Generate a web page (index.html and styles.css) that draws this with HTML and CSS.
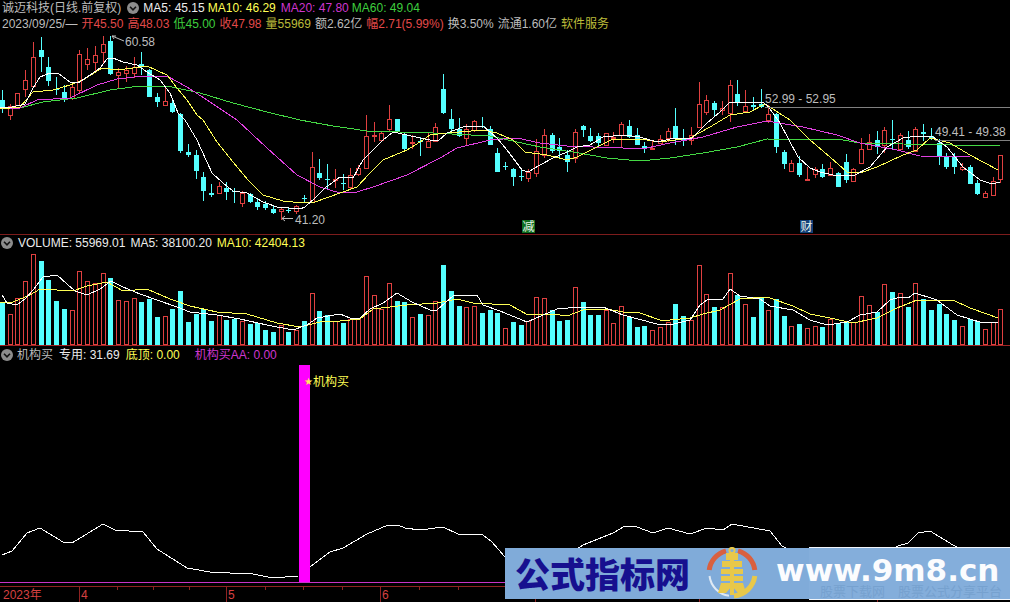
FILE: index.html
```html
<!DOCTYPE html>
<html lang="zh-CN">
<head>
<meta charset="utf-8">
<title>诚迈科技 日线</title>
<link rel="stylesheet" href="styles.css">
</head>
<body>
<main class="terminal">
  <section class="panel panel-price">
    <div class="row row-first">
      <span class="t-gray name">诚迈科技(日线.前复权)</span>
      <span class="chev"><svg viewBox="0 0 12 12"><circle cx="6" cy="6" r="6"/><path d="M3 4.8 6 7.8 9 4.8"/></svg></span>
      <span class="t-white">MA5: 45.15</span>
      <span class="t-yellow">MA10: 46.29</span>
      <span class="t-purple">MA20: 47.80</span>
      <span class="t-green">MA60: 49.04</span>
    </div>
    <div class="row row-second">
      <span class="t-gray">2023/09/25/—</span>
      <span class="t-red">开45.50</span>
      <span class="t-red">高48.03</span>
      <span class="t-green">低45.00</span>
      <span class="t-red">收47.98</span>
      <span class="t-olive">量55969</span>
      <span class="t-gray">额2.62亿</span>
      <span class="t-red">幅2.71(5.99%)</span>
      <span class="t-gray">换3.50%</span>
      <span class="t-gray">流通1.60亿</span>
      <span class="t-olive">软件服务</span>
    </div>
    <svg class="chart chart-price" viewBox="0 32 1010 202" aria-label="K线图">
      <g id="candles"></g>
      <g id="priceLines"></g>
      <path class="level" d="M765 107.5H1010M935 140.5H1010"/>
      <path class="pointer" d="M112 36 124 41M112 36 116 36M112 36 114 39M282 218.5H293M282 218.5 285 216M282 218.5 285 221"/>
      <text class="lbl" x="125" y="46">60.58</text>
      <text class="lbl" x="295" y="224">41.20</text>
      <text class="lbl" x="765" y="103">52.99 - 52.95</text>
      <text class="lbl" x="935" y="136">49.41 - 49.38</text>
      <rect class="tag-green" x="522" y="220" width="13" height="13"/>
      <text class="tag-text" x="522.5" y="231">减</text>
      <rect class="tag-blue" x="800" y="220" width="13" height="13"/>
      <text class="tag-text" x="800.5" y="231">财</text>
    </svg>
  </section>

  <section class="panel panel-volume">
    <div class="row row-sub">
      <span class="chev"><svg viewBox="0 0 12 12"><circle cx="6" cy="6" r="6"/><path d="M3 4.8 6 7.8 9 4.8"/></svg></span>
      <span class="t-white">VOLUME: 55969.01</span>
      <span class="t-white">MA5: 38100.20</span>
      <span class="t-yellow">MA10: 42404.13</span>
    </div>
    <svg class="chart chart-volume" viewBox="0 250 1010 95" aria-label="成交量">
      <g id="bars"></g>
      <g id="volumeLines"></g>
    </svg>
  </section>

  <section class="panel panel-signal">
    <div class="row row-sub">
      <span class="chev"><svg viewBox="0 0 12 12"><circle cx="6" cy="6" r="6"/><path d="M3 4.8 6 7.8 9 4.8"/></svg></span>
      <span class="t-gray">机构买</span>
      <span class="t-white">专用: 31.69</span>
      <span class="t-yellow">底顶: 0.00</span>
      <span class="t-purple gap-wide">机构买AA: 0.00</span>
    </div>
    <svg class="chart chart-signal" viewBox="0 362 1010 240" aria-label="机构买指标">
      <polyline id="signalA" class="line white" points=""/>
      <polyline id="signalB" class="line white" points=""/>
      <polyline id="signalC" class="line white" points=""/>
      <path class="zero" d="M0 582.5H1010"/>
      <rect class="signal-bar" x="299" y="365" width="11" height="217"/>
      <text class="star" x="304" y="385">★</text>
      <text class="signal-name" x="313" y="386">机构买</text>
      <path class="axis" d="M0 586.5H1010M79.5 586V602M226.5 586V602M380.5 586V602M535.5 586V602M699.5 586V602M877.5 586V602"/>
      <path class="axis" d="M117.5 586V590M153.5 586V590M189.5 586V590M265.5 586V590M303.5 586V590M342.5 586V590M419.5 586V590M458.5 586V590"/>
      <text class="axis-text" x="3" y="599">2023年</text>
      <text class="axis-text" x="81" y="599">4</text>
      <text class="axis-text" x="228" y="599">5</text>
      <text class="axis-text" x="382" y="599">6</text>
    </svg>
  </section>

  <aside class="watermark" aria-label="公式指标网 www.9m8.cn">
    <div class="ghost">
      <span class="ghost-text">股票下载网　股票公式分享平台</span>
    </div>
    <div class="brand">公式指标网</div>
    <svg class="seal" viewBox="0 0 52 52">
      <path class="seal-red" d="M3.2 23A23 23 0 0 1 20 3.8M32 3.8A23 23 0 0 1 48.8 23"/>
      <path class="seal-yellow" d="M48.8 29A23 23 0 0 1 28 48.9"/>
      <path class="seal-white" d="M3.5 29A23 23 0 0 0 23 48.8"/>
      <circle class="seal-ring" cx="26" cy="3.5" r="2.6"/>
      <rect class="seal-fill" x="20" y="6" width="12" height="7"/>
      <rect class="seal-fill" x="16" y="14" width="20" height="6"/>
      <rect class="seal-fill" x="24" y="12" width="4" height="36"/>
      <rect class="seal-fill" x="15" y="22" width="22" height="5"/>
      <rect class="seal-fill" x="15" y="29" width="22" height="5"/>
      <path class="seal-fill" d="M15 36H37L40 46H32L26 39 20 46H12Z"/>
    </svg>
    <div class="site">www.9m8.cn</div>
  </aside>
</main>
<script src="chart.js"></script>
</body>
</html>
```

FILE: styles.css
```css
* { box-sizing: border-box; }
html, body { margin: 0; padding: 0; background: #000; }
body { width: 1010px; height: 602px; overflow: hidden; font: 12px/16px "Liberation Sans", "Noto Sans CJK SC", sans-serif; }

.terminal { position: relative; width: 1010px; height: 602px; display: flex; flex-direction: column; background: #000; }
.panel { display: flex; flex-direction: column; }
.panel-price { height: 235px; border-bottom: 1px solid #7d1c1c; }
.panel-volume { height: 111px; border-bottom: 1px solid #a02424; }
.panel-signal { flex: 1; }

.row { display: flex; align-items: center; white-space: nowrap; flex: none; }
.row-first { height: 16px; padding-left: 2px; }
.row-second { height: 16px; padding-left: 2px; gap: 4px; }
.row-sub { height: 15px; padding: 1px 0 0 1px; gap: 4px; }
.panel-signal .row-sub { height: 16px; }
.row-first .chev { margin: 0 4px 0 6px; }
.row-first .t-white { margin-right: 3px; }
.row-first .t-yellow { margin-right: 5px; }
.row-first .t-purple { margin-right: 3px; }
.row-sub .t-white, .row-sub .t-yellow { margin-left: 1px; }
.panel-signal .t-white, .panel-signal .t-yellow { margin-left: 2px; }
.chev { display: block; width: 12px; height: 12px; flex: none; }
.chev svg { display: block; width: 12px; height: 12px; }
.chev circle { fill: #8c8c8c; }
.chev path { fill: none; stroke: #111; stroke-width: 1.6; }
.panel-signal .gap-wide { margin-left: 11px; }

.t-gray { color: #bdbdbd; }
.t-white { color: #ececec; }
.t-yellow { color: #ffff55; }
.t-purple { color: #cf36cf; }
.t-green { color: #3ecf3e; }
.t-red { color: #e24a4a; }
.t-olive { color: #bcbc3a; }

.chart { display: block; width: 1010px; flex: none; }
.chart-price { height: 202px; }
.chart-volume { height: 95px; }
.chart-signal { height: 240px; }

.wick-up, .body-up { stroke: #e04040; fill: none; shape-rendering: crispEdges; }
.wick-dn { stroke: #54ffff; fill: none; shape-rendering: crispEdges; }
.body-dn { fill: #54ffff; shape-rendering: crispEdges; }

.line { fill: none; stroke-width: 1; shape-rendering: crispEdges; }
.white { stroke: #ffffff; }
.yellow { stroke: #ffff55; }
.purple { stroke: #e040e0; }
.green { stroke: #44d844; }

.level { stroke: #808080; fill: none; shape-rendering: crispEdges; }
.pointer { stroke: #bdbdbd; fill: none; }
.lbl { fill: #bdbdbd; font: 12px "Liberation Sans", sans-serif; }
.tag-green { fill: #0e6d1e; }
.tag-blue { fill: #123f78; }
.tag-text { fill: #e8f4ea; font: 12px "Noto Sans CJK SC", sans-serif; }

.signal-bar { fill: #ff00ff; }
.star { fill: #ffe860; font: 10px "DejaVu Sans", sans-serif; }
.signal-name { fill: #ffff55; font: 12px "Noto Sans CJK SC", sans-serif; }
.zero { stroke: #c733c7; fill: none; shape-rendering: crispEdges; }
.axis { stroke: #8f2222; fill: none; shape-rendering: crispEdges; }
.axis-text { fill: #d64040; font: 12px "Liberation Sans", "Noto Sans CJK SC", sans-serif; }

.watermark { position: absolute; left: 505px; top: 548px; width: 505px; height: 51px; background: #80abd9; }
.ghost { position: absolute; left: 304px; top: -1px; width: 201px; height: 53px; border-top: 1px solid #f2f6fb; border-bottom: 1px solid #f2f6fb; background: #84aedb; }
.ghost-text { position: absolute; left: 11px; top: 36px; font: 13px/13px "Noto Sans CJK SC", sans-serif; color: #76a1cf; white-space: nowrap; }
.brand { position: absolute; left: 10px; top: 2px; font: 900 35px/46px "Noto Sans CJK SC", sans-serif; color: #17108f; white-space: nowrap; }
.seal { position: absolute; left: 201px; top: -1px; width: 52px; height: 52px; }
.seal-red { fill: none; stroke: #d9603f; stroke-width: 5; }
.seal-yellow { fill: none; stroke: #e8c84a; stroke-width: 5; }
.seal-white { fill: none; stroke: #dfe9f4; stroke-width: 2; }
.seal-ring { fill: none; stroke: #e8c84a; stroke-width: 2; }
.seal-fill { fill: #e8c84a; }
.site { position: absolute; left: 271px; top: 8px; font: 900 31px/28px "DejaVu Sans", sans-serif; color: #fbfcfe; white-space: nowrap; }
```

FILE: chart.js
```js
// [high, bodyTop, bodyBottom, low, isUp] in chart pixels
var K = [
[90,100,108,113,0],[104,106,115,120,1],[93,93,105,106,1],[70,80,89,97,1],[42,57,86,88,1],[37,50,57,72,0],[57,67,81,86,0],[77,89,90,95,0],[85,92,98,102,0],[82,87,98,100,1],
[50,54,90,93,1],[48,59,64,70,1],[46,55,62,72,1],[36,44,52,63,1],[36,41,74,75,0],[68,72,75,88,1],[66,70,73,82,1],[57,67,73,78,1],[52,64,67,75,0],[69,70,97,97,0],
[93,97,102,107,0],[87,101,105,105,1],[100,103,112,113,0],[113,114,151,153,0],[144,152,155,157,0],[150,155,171,179,0],[172,177,191,201,0],[184,193,195,197,0],[182,186,193,193,1],[182,188,192,200,0],
[188,191,192,203,0],[191,193,203,207,1],[193,194,202,203,0],[199,202,207,210,0],[201,204,208,210,0],[205,209,213,214,0],[207,209,211,220,1],[207,210,211,213,0],[205,206,211,214,1],[195,198,199,203,0],
[152,167,202,203,1],[159,173,178,180,0],[164,179,180,190,0],[169,179,180,188,1],[174,183,184,190,0],[168,175,187,189,1],[165,168,174,176,1],[115,136,168,168,1],[122,135,136,142,1],[131,133,140,142,1],
[105,119,129,131,1],[119,119,131,133,0],[133,135,149,150,0],[135,142,143,149,1],[137,141,142,156,0],[133,141,147,147,1],[123,127,141,142,1],[74,89,113,114,0],[109,119,129,133,0],[118,129,136,137,0],
[124,129,138,145,1],[120,121,130,132,1],[117,126,127,128,0],[126,129,145,145,0],[148,153,172,172,0],[162,166,167,170,0],[168,169,177,186,0],[168,176,177,181,0],[169,172,178,182,1],[139,151,173,177,1],
[129,135,155,158,1],[133,135,151,153,0],[138,147,151,158,0],[150,155,162,172,0],[129,132,158,163,1],[125,126,130,137,0],[128,136,141,142,0],[133,136,143,147,0],[133,133,145,145,1],[132,137,138,143,1],
[122,124,135,147,1],[120,126,137,138,0],[128,135,145,145,0],[142,146,148,153,0],[140,148,149,150,1],[135,139,143,144,1],[128,131,138,142,1],[108,126,139,145,0],[129,139,140,146,0],[127,135,140,145,1],
[82,104,127,128,1],[95,100,112,115,1],[101,103,110,116,0],[101,108,110,115,1],[80,85,113,122,1],[80,94,102,106,0],[90,106,111,112,1],[97,105,107,110,0],[89,104,107,108,0],[105,114,120,123,1],
[113,114,147,153,0],[150,152,164,169,0],[160,163,171,171,1],[156,163,175,177,0],[167,179,180,180,1],[167,169,174,178,1],[164,169,177,178,0],[162,168,175,175,1],[172,173,187,187,0],[154,162,180,183,0],
[168,169,181,181,1],[138,149,163,164,1],[134,142,149,149,1],[131,140,147,154,0],[127,130,145,153,1],[120,139,140,150,0],[133,135,149,151,1],[131,140,147,149,0],[127,129,151,152,1],[124,132,134,141,0],
[128,136,138,140,0],[139,143,157,165,0],[153,157,167,169,0],[153,157,167,174,0],[163,167,169,171,1],[165,167,184,184,0],[180,183,194,195,0],[191,193,197,197,1],[177,181,195,196,1],[155,155,179,183,1]
];

// Volume bars as top pixel; negative means up (hollow red)
var V = [303,-314,-298,-281,-254,261,280,301,309,-310,-271,-281,-283,-273,278,-300,-301,-298,302,299,317,-316,309,291,322,314,309,321,-315,320,319,-321,324,323,330,332,-325,332,-330,321,-293,311,315,-321,
323,-319,-318,-276,-295,-309,-283,301,302,-317,314,-315,-301,265,291,306,-307,-306,313,310,313,-328,322,325,-321,-297,-298,310,321,320,-287,302,315,315,-310,-323,-306,317,327,326,-330,-327,-322,304,
316,-320,-265,-294,307,-307,-273,295,-304,317,298,-310,299,316,-326,324,-328,-326,327,-319,323,322,-322,-296,-305,312,-284,292,-293,307,-283,299,310,304,314,320,-326,319,321,-329,-322,-309];

var LINES = {
  priceLines: [
    ['green', '20,108 43,102 77,98 110,90 140,86 167,86 200,93 233,103 267,112 300,120 333,126 340,127 367,131 433,133 490,136 540,147 573,152 607,158 640,161 670,158 703,153 737,147 767,139 843,140 860,143 903,144 1000,146'],
    ['purple', '0,109 20,108 37,100 70,98 97,85 117,79 143,76 167,76 187,87 207,100 237,120 267,148 297,175 320,187 340,193 357,192 373,187 407,175 440,158 457,148 490,140 517,138 540,143 567,146 593,147 623,148 647,148 670,143 703,137 737,127 767,121 803,127 837,135 860,143 897,150 920,156 970,157 998,157'],
    ['yellow', '0,109 20,107 33,92 53,90 70,85 83,80 102,68 117,70 133,68 147,66 167,75 177,88 187,100 197,115 203,120 217,142 233,162 248,180 263,195 283,201 303,203 315,202 340,193 357,187 370,173 383,160 407,150 420,142 430,135 447,133 483,130 497,133 513,140 525,152 547,155 567,160 577,157 597,147 613,139 640,139 660,142 690,138 710,127 730,115 750,112 765,104 790,120 810,140 830,157 847,172 860,173 877,167 903,155 917,150 930,138 950,143 970,155 998,170'],
    ['white', '0,108 12,107 25,104 33,88 40,77 50,73 58,73 70,82 78,83 90,75 100,68 107,59 113,58 123,62 137,65 147,72 160,80 170,93 178,113 185,120 197,140 212,173 223,183 233,191 247,193 263,202 277,207 300,209 305,207 315,198 325,188 340,177 353,178 363,160 383,140 393,132 407,135 420,138 430,140 438,141 447,133 463,127 483,126 497,138 507,150 522,170 528,172 540,165 553,158 567,152 577,147 590,145 603,137 623,135 640,137 657,142 670,139 692,138 707,123 720,112 730,102 762,102 767,105 780,123 798,157 810,168 820,172 833,175 855,175 870,167 887,147 903,138 917,136 933,137 947,147 963,167 980,180 992,184 1000,182']
  ],
  volumeLines: [
    ['yellow', '0,303 13,302 30,295 40,289 57,290 73,291 87,286 107,282 123,291 147,289 170,299 190,306 217,312 247,314 277,323 300,327 320,322 340,321 360,319 373,309 407,305 437,303 457,299 473,303 510,305 528,315 553,314 567,316 583,310 607,309 623,312 640,313 660,320 670,320 690,318 703,314 720,310 740,299 767,297 793,306 810,314 830,318 853,323 877,318 897,308 917,300 953,300 970,308 998,318'],
    ['white', '2,295 7,303 17,305 25,299 33,290 43,277 57,275 67,284 75,291 87,295 100,289 111,281 123,287 140,294 157,300 177,307 190,312 217,315 240,319 267,325 293,330 307,325 317,318 340,314 350,318 360,318 370,309 383,303 397,293 412,302 430,310 437,310 453,296 477,295 483,305 500,311 527,322 543,315 557,309 580,307 603,307 623,315 657,324 670,325 690,320 700,305 707,300 723,299 730,289 740,296 760,299 770,306 793,310 810,320 827,325 847,322 860,315 877,312 890,300 900,297 908,298 915,293 937,300 957,315 983,323 998,322']
  ]
};

var SIGNAL = {
  signalA: '2,555 12,551 27,533 40,528 63,542 72,543 103,524 115,530 143,532 157,549 187,568 210,572 230,573 253,574 273,578 298,576',
  signalB: '310,567 330,552 343,548 367,534 388,525 398,525 405,528 420,530 443,527 458,534 483,535 492,542 505,557 560,560 583,545 613,533 625,526 637,527 653,533 668,528 690,534 707,528 723,530 732,524 770,531 782,546 790,550',
  signalC: '890,550 898,546 908,543 918,533 930,531 953,545 957,547 1000,550'
};

var NS = 'http://www.w3.org/2000/svg';
function el(parent, tag, attrs) {
  var node = document.createElementNS(NS, tag);
  for (var k in attrs) node.setAttribute(k, attrs[k]);
  parent.appendChild(node);
  return node;
}
function xAt(i) { return Math.round(2 + i * 7.74); }

var candles = document.getElementById('candles');
K.forEach(function (c, i) {
  var x = xAt(i), up = c[4];
  if (up) {
    el(candles, 'path', { 'class': 'wick-up', d: 'M' + (x + .5) + ' ' + c[0] + 'V' + c[1] + 'M' + (x + .5) + ' ' + c[2] + 'V' + c[3] });
    el(candles, 'rect', { 'class': 'body-up', x: x - 1.5, y: c[1] + .5, width: 4, height: Math.max(c[2] - c[1], 1) });
  } else {
    el(candles, 'path', { 'class': 'wick-dn', d: 'M' + (x + .5) + ' ' + c[0] + 'V' + c[3] });
    el(candles, 'rect', { 'class': 'body-dn', x: x - 2, y: c[1], width: 5, height: Math.max(c[2] - c[1], 1) });
  }
});

var bars = document.getElementById('bars');
V.forEach(function (v, i) {
  var x = xAt(i), top = Math.abs(v);
  if (v < 0) el(bars, 'rect', { 'class': 'body-up', x: x - 1.5, y: top + .5, width: 4, height: 344 - top });
  else el(bars, 'rect', { 'class': 'body-dn', x: x - 2, y: top, width: 5, height: 345 - top });
});

Object.keys(LINES).forEach(function (id) {
  var g = document.getElementById(id);
  LINES[id].forEach(function (l) {
    el(g, 'polyline', { 'class': 'line ' + l[0], points: l[1] });
  });
});
Object.keys(SIGNAL).forEach(function (id) {
  document.getElementById(id).setAttribute('points', SIGNAL[id]);
});
```
